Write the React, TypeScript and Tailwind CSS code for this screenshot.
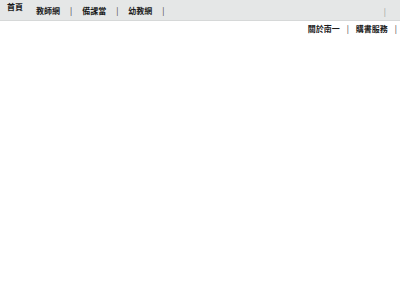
export default function App() {
  const links = ["教師網", "備課當", "幼教網"];
  return (
    <div className="h-[300px] w-[400px] bg-white font-['Noto_Sans_CJK_TC',sans-serif] text-[8px] font-bold leading-none text-[#1a1a1a]">
      {/* top bar */}
      <div className="flex h-[21px] border-b border-[#d6d8d8] bg-[#e5e7e7]">
        <span className="ml-[7px] mt-[3px]">首頁</span>
        <div className="ml-[13px] mt-[7px] flex">
          {links.map((l) => (
            <div key={l} className="flex">
              <span>{l}</span>
              <span className="mx-[10px] font-normal text-[#333]">|</span>
            </div>
          ))}
        </div>
        <span className="ml-auto mr-[14px] mt-[8px] font-normal text-[#999]">|</span>
      </div>
      {/* second row */}
      <div className="mt-[4px] flex justify-end pr-[3px]">
        <span>關於南一</span>
        <span className="mx-[7px] font-normal text-[#333]">|</span>
        <span>購書服務</span>
        <span className="ml-[7px] font-normal text-[#333]">|</span>
      </div>
    </div>
  );
}
